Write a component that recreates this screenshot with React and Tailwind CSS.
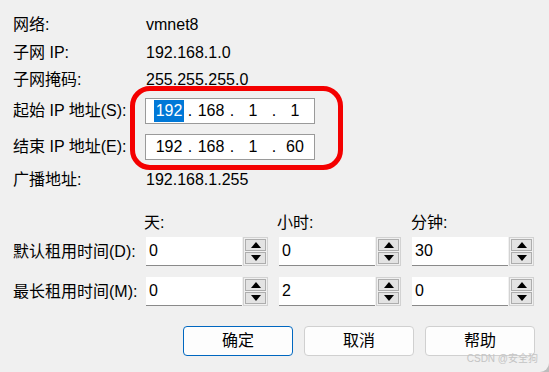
import React from "react";

const FONT = { fontFamily: '"Liberation Sans", "Noto Sans CJK SC", sans-serif' };

function InfoRow({ label, value, className = "" }) {
  return (
    <div className={`flex items-center ${className}`}>
      <div className="w-[133px] shrink-0 leading-none">{label}</div>
      <div className="leading-none">{value}</div>
    </div>
  );
}

function IpField({ parts, highlightFirst }) {
  return (
    <div className="flex items-center h-[26px] w-[170px] bg-white border border-[#9a9a9a] pl-[4px] leading-none">
      {parts.map((p, i) => (
        <React.Fragment key={i}>
          <div className="w-[38px] flex justify-center">
            {i === 0 && highlightFirst ? (
              <span className="bg-[#0078d7] text-white px-[2px] py-[3px]">{p}</span>
            ) : (
              <span>{p}</span>
            )}
          </div>
          {i < 3 && <div className="w-[4px] flex justify-center">.</div>}
        </React.Fragment>
      ))}
    </div>
  );
}

function SpinBtn({ up }) {
  return (
    <div className="flex-1 flex items-center justify-center bg-[#e3e3e3] border border-[#adadad]">
      <svg width="10" height="6" viewBox="0 0 10 6">
        {up ? <polygon points="5,0 10,6 0,6" fill="#000" /> : <polygon points="0,0 10,0 5,6" fill="#000" />}
      </svg>
    </div>
  );
}

function Spin({ value }) {
  return (
    <div className="flex w-[122px] h-[29px] mr-[11px]">
      <div className="w-[96px] h-full bg-white border-b border-[#8a8a8a] pl-[3px] pt-[6px] leading-none">{value}</div>
      <div className="ml-[1px] w-[25px] h-full flex flex-col border border-[#d2d2d2] p-[1px] gap-[1px] bg-[#f0f0f0]">
        <SpinBtn up />
        <SpinBtn />
      </div>
    </div>
  );
}

function Btn({ children, primary }) {
  return (
    <div
      className={`w-[110px] h-[30px] flex items-center justify-center rounded-[4px] bg-[#fdfdfd] border ${
        primary ? "border-[#0067c0]" : "border-[#d0d0d0]"
      }`}
    >
      {children}
    </div>
  );
}

export default function App() {
  return (
    <div
      className="relative w-[549px] h-[372px] bg-[#f0f0f0] text-[16px] text-black overflow-hidden"
      style={FONT}
    >
      <div className="flex flex-col pl-[13px] pt-[11px]">
        <InfoRow label="网络:" value="vmnet8" className="h-[28px]" />
        <InfoRow label="子网 IP:" value="192.168.1.0" className="h-[28px]" />
        <InfoRow label="子网掩码:" value="255.255.255.0" className="h-[26px]" />
        <div className="flex items-center h-[26px] mt-[5px]">
          <div className="w-[132px] shrink-0 leading-none">起始 IP 地址(S):</div>
          <IpField parts={["192", "168", "1", "1"]} highlightFirst />
        </div>
        <div className="flex items-center h-[26px] mt-[10px]">
          <div className="w-[132px] shrink-0 leading-none">结束 IP 地址(E):</div>
          <IpField parts={["192", "168", "1", "60"]} />
        </div>
        <InfoRow label="广播地址:" value="192.168.1.255" className="h-[26px] mt-[7px]" />

        <div className="flex h-[20px] mt-[20px] items-center leading-none">
          <div className="w-[131px]" />
          <div className="w-[133px]">天:</div>
          <div className="w-[134px]">小时:</div>
          <div>分钟:</div>
        </div>
        <div className="flex items-center mt-[4px]">
          <div className="w-[133px] leading-none">默认租用时间(D):</div>
          <Spin value="0" />
          <Spin value="0" />
          <Spin value="30" />
        </div>
        <div className="flex items-center mt-[11px]">
          <div className="w-[133px] leading-none">最长租用时间(M):</div>
          <Spin value="0" />
          <Spin value="2" />
          <Spin value="0" />
        </div>

        <div className="flex justify-end gap-[11px] pr-[14px] mt-[20px]">
          <Btn primary>确定</Btn>
          <Btn>取消</Btn>
          <Btn>帮助</Btn>
        </div>
      </div>

      {/* red annotation */}
      <div className="absolute left-[130px] top-[86px] w-[213px] h-[84px] border-[5px] border-[#f40000] rounded-[20px]" />

      {/* watermark */}
      <div className="absolute right-[11px] bottom-[8px] text-[10px] leading-none text-[#c4c4c4]">
        CSDN @安全狗
      </div>

      {/* window corner */}
      <div className="absolute right-0 bottom-0 w-[10px] h-[10px] bg-[#bdbdbd]">
        <div className="w-full h-full bg-[#f0f0f0] rounded-br-[9px]" />
      </div>
    </div>
  );
}
